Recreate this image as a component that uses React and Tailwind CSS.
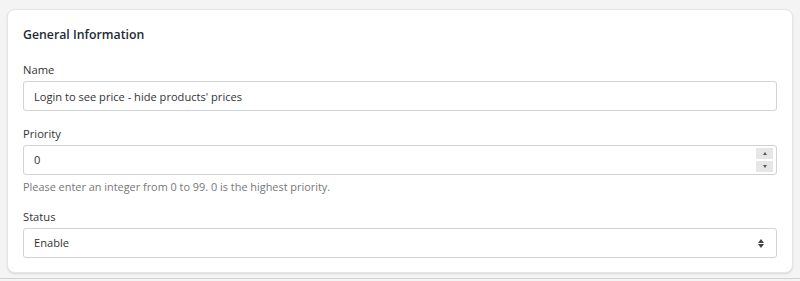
export default function App() {
  return (
    <div
      className="h-[281px] w-[800px] overflow-hidden bg-[#f4f4f4] flex flex-col"
      style={{ fontFamily: '"Open Sans", "Noto Sans", Arial, sans-serif' }}
    >
      <div className="mt-[9px] mx-[7px] h-[264px] bg-white rounded-[8px] border border-[#e6e6e6] shadow-[0_1px_2px_rgba(0,0,0,0.12)] px-[15px] pt-[15px]">
        <h2 className="text-[12.3px] leading-[20px] font-semibold text-[#212b36]">
          General Information
        </h2>

        {/* Name */}
        <label className="block mt-[16px] mb-[2px] text-[11.2px] leading-[18px] text-[#333]">
          Name
        </label>
        <input
          type="text"
          defaultValue="Login to see price - hide products' prices"
          className="w-full h-[30px] border border-[#cfd3d6] rounded-[3px] px-[10px] text-[11.1px] text-[#333] outline-none"
        />

        {/* Priority */}
        <label className="block mt-[14px] mb-[2px] text-[11.2px] leading-[18px] text-[#333]">
          Priority
        </label>
        <div className="relative h-[30px] border border-[#cfd3d6] rounded-[3px] flex items-center px-[10px] text-[11.1px] text-[#333]">
          0
          <div className="absolute right-[3px] top-[2px] flex flex-col gap-[2px]">
            <div className="w-[17px] h-[11px] bg-[#e6e6e6] flex items-center justify-center">
              <div className="w-0 h-0 border-l-[2.5px] border-r-[2.5px] border-b-[3px] border-l-transparent border-r-transparent border-b-[#555]" />
            </div>
            <div className="w-[17px] h-[11px] bg-[#e6e6e6] flex items-center justify-center">
              <div className="w-0 h-0 border-l-[2.5px] border-r-[2.5px] border-t-[3px] border-l-transparent border-r-transparent border-t-[#555]" />
            </div>
          </div>
        </div>
        <p className="mt-[3px] text-[10.9px] leading-[18px] text-[#777]">
          Please enter an integer from 0 to 99. 0 is the highest priority.
        </p>

        {/* Status */}
        <label className="block mt-[12px] mb-[2px] text-[11.2px] leading-[18px] text-[#333]">
          Status
        </label>
        <div className="h-[30px] border border-[#cfd3d6] rounded-[3px] flex items-center justify-between pl-[10px] pr-[12px] text-[11.1px] text-[#333]">
          Enable
          <div className="flex flex-col gap-[1px]">
            <div className="w-0 h-0 border-l-[3.5px] border-r-[3.5px] border-b-[4px] border-l-transparent border-r-transparent border-b-[#444]" />
            <div className="w-0 h-0 border-l-[3.5px] border-r-[3.5px] border-t-[4px] border-l-transparent border-r-transparent border-t-[#444]" />
          </div>
        </div>
      </div>
      <div className="mt-[5px] h-[1px] bg-[#d2d2d2]" />
    </div>
  );
}
